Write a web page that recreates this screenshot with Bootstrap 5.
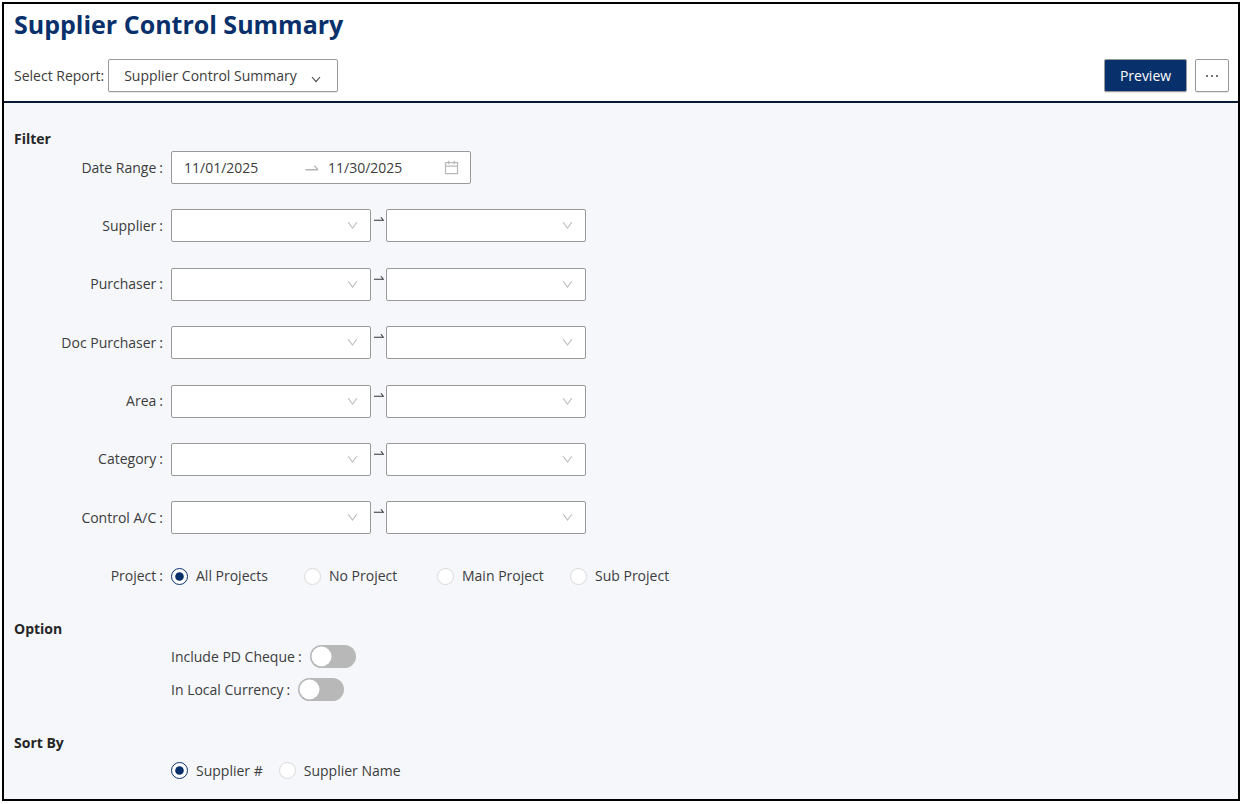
<!DOCTYPE html>
<html lang="en">
<head>
<meta charset="utf-8">
<meta name="viewport" content="width=device-width, initial-scale=1">
<title>Supplier Control Summary</title>
<link href="https://cdn.jsdelivr.net/npm/bootstrap@5.3.0/dist/css/bootstrap.min.css" rel="stylesheet">
<style>
  :root { --navy: #08306b; --line: #999; --ink: #3c3c3c; }
  body { font-family: "Open Sans", "Noto Sans", sans-serif; font-size: 14px; line-height: 22px; color: var(--ink); padding: 2px 2px 3px; min-height: 100vh; }
  .report-frame { border: 2px solid #000; background: #f5f7fb; }
  .report-head { background: #fff; border-bottom: 2px solid #0b1a33; padding: 0 9px 9px 10px; }
  .report-title { font-size: 25px; line-height: 40px; font-weight: 700; color: var(--navy); margin-bottom: 15px; }
  .report-body { padding: 25px 10px 12px; }
  .section-title { font-size: 14px; line-height: 22px; font-weight: 700; color: #262626; margin: 0 0 1px; }
  .field-grid { display: grid; grid-template-columns: 157px 1fr; grid-auto-rows: 1fr; min-height: 467px; }
  .field-label { height: 33px; display: flex; align-items: center; justify-content: flex-end; padding-right: 8px; }
  .field-cell { height: 33px; }
  .colon { margin-left: 3px; }
  .box { height: 33px; border: 1px solid var(--line); border-radius: 2px; background-color: #fff; font-size: 14px; color: var(--ink); }
  .form-select.box { width: 200px; padding: 0 32px 0 12px; background-size: 13px 13px; background-position: right 11px center;
    background-image: url("data:image/svg+xml,%3csvg xmlns='http://www.w3.org/2000/svg' viewBox='0 0 1024 1024'%3e%3cpath fill='%23bbb' d='M884 256h-75c-5.1 0-9.9 2.5-12.9 6.6L512 654.2 227.9 262.6c-3-4.1-7.8-6.6-12.9-6.6h-75c-6.5 0-10.3 7.4-6.5 12.7l352.6 486.1c12.8 17.6 39 17.6 51.7 0l352.6-486.1c3.9-5.3.1-12.7-6.4-12.7z'/%3e%3c/svg%3e"); }
  .form-select.report-pick { width: 230px; padding: 0 32px 0 15px; background-size: 10px 7px; background-position: right 16px top 16px; box-shadow: 0 1px 1px #0000001a;
    background-image: url("data:image/svg+xml,%3csvg xmlns='http://www.w3.org/2000/svg' viewBox='0 0 10 7'%3e%3cpath fill='none' stroke='%23444' stroke-width='1.1' d='M1 1l4 4.6L9 1'/%3e%3c/svg%3e"); }
  .tool-btn { height: 33px; border: 1px solid var(--line); border-radius: 2px; font-size: 14px; line-height: 22px; box-shadow: 0 1px 1px #0000001a; padding: 0; }
  .tool-btn.btn-preview { width: 83px; background: var(--navy); color: #fff; font-weight: 500; }
  .tool-btn.btn-more { width: 34px; background: #fff; display: flex; align-items: center; justify-content: center; }
  .swap { width: 15px; height: 33px; display: flex; justify-content: center; padding-top: 3px; }
  .date-box { width: 300px; display: flex; align-items: center; padding: 0 12px 0 12px; }
  .date-box input { border: 0; padding: 0; background: none; color: inherit; width: 115px; line-height: 22px; }
  .date-box svg { flex: none; }
  .date-box .to-arrow { margin: 0 7px 0 4px; }
  .form-check-input.pick { float: none; width: 17px; height: 17px; margin: 0; border: 1px solid #d9d9d9; background-color: #fff; flex: none; }
  .form-check-input.pick:checked { border-color: var(--navy); background-color: #fff; background-size: 17px 17px; background-position: center;
    background-image: url("data:image/svg+xml,%3csvg xmlns='http://www.w3.org/2000/svg' viewBox='0 0 17 17'%3e%3ccircle cx='8.5' cy='8.5' r='4.3' fill='%2308306b'/%3e%3c/svg%3e"); }
  .pick-item { display: flex; align-items: center; gap: 8px; }
  .wide-picks .pick-item { width: 133px; }
  .indent { margin-left: 157px; }
  .line-row { height: 33px; display: flex; align-items: center; }
  .form-check-input.toggle { float: none; margin: 0 0 0 8px; width: 46px; height: 23px; border: 0; border-radius: 12px; background-color: #b8b8b8; background-size: 23px 23px; background-position: left center;
    background-image: url("data:image/svg+xml,%3csvg xmlns='http://www.w3.org/2000/svg' viewBox='0 0 23 23'%3e%3ccircle cx='11.5' cy='12.5' r='9.5' fill='%23999' opacity='.5'/%3e%3ccircle cx='11.5' cy='11.5' r='10' fill='%23fff'/%3e%3c/svg%3e"); }
  .sort-title { margin-top: 26px; margin-bottom: 0; }
</style>
</head>
<body>
<svg class="d-none" xmlns="http://www.w3.org/2000/svg">
  <symbol id="swap-right" viewBox="0 0 1024 1024"><path d="M873.1 596.2l-164-208A32 32 0 00684 376h-64.8c-6.7 0-10.4 7.700-6.300 13l144.300 183H152c-4.400 0-8 3.600-8 8v60c0 4.400 3.600 8 8 8h695.900c26.800 0 41.700-30.800 25.200-51.800z"/></symbol>
</svg>
<div class="report-frame">
  <header class="report-head">
    <h1 class="report-title">Supplier Control Summary</h1>
    <div class="d-flex align-items-center justify-content-between">
      <div class="d-flex align-items-center">
        <label for="report">Select Report:</label>
        <select id="report" class="form-select box report-pick ms-1"><option>Supplier Control Summary</option></select>
      </div>
      <div class="d-flex gap-2">
        <button type="button" class="btn tool-btn btn-preview">Preview</button>
        <button type="button" class="btn tool-btn btn-more" aria-label="More"><svg width="14" height="4" viewBox="0 0 14 4" fill="#444"><circle cx="2" cy="2" r="1"/><circle cx="7" cy="2" r="1"/><circle cx="12" cy="2" r="1"/></svg></button>
      </div>
    </div>
  </header>
  <main class="report-body">
    <h2 class="section-title">Filter</h2>
    <div class="field-grid">
      <label class="field-label" for="d1">Date Range<span class="colon">:</span></label>
      <div class="field-cell">
        <div class="box date-box">
          <input id="d1" type="text" value="11/01/2025">
          <svg class="to-arrow" width="18" height="18" fill="#b5b5b5"><use href="#swap-right"/></svg>
          <input type="text" value="11/30/2025" aria-label="End date">
          <svg width="17" height="17" viewBox="0 0 1024 1024" fill="#b8b8b8"><path d="M880 184H712v-64c0-4.400-3.600-8-8-8h-56c-4.400 0-8 3.600-8 8v64H384v-64c0-4.400-3.600-8-8-8h-56c-4.400 0-8 3.600-8 8v64H144c-17.700 0-32 14.300-32 32v664c0 17.700 14.300 32 32 32h736c17.700 0 32-14.300 32-32V216c0-17.700-14.300-32-32-32zm-40 656H184V460h656v380zM184 392V256h128v48c0 4.400 3.600 8 8 8h56c4.400 0 8-3.600 8-8v-48h256v48c0 4.400 3.600 8 8 8h56c4.400 0 8-3.600 8-8v-48h128v136H184z"/></svg>
        </div>
      </div>
      <label class="field-label" for="f1">Supplier<span class="colon">:</span></label>
      <div class="field-cell d-flex"><select id="f1" class="form-select box"><option></option></select><span class="swap"><svg width="14" height="14" fill="#333"><use href="#swap-right"/></svg></span><select class="form-select box" aria-label="Supplier to"><option></option></select></div>
      <label class="field-label" for="f2">Purchaser<span class="colon">:</span></label>
      <div class="field-cell d-flex"><select id="f2" class="form-select box"><option></option></select><span class="swap"><svg width="14" height="14" fill="#333"><use href="#swap-right"/></svg></span><select class="form-select box" aria-label="Purchaser to"><option></option></select></div>
      <label class="field-label" for="f3">Doc Purchaser<span class="colon">:</span></label>
      <div class="field-cell d-flex"><select id="f3" class="form-select box"><option></option></select><span class="swap"><svg width="14" height="14" fill="#333"><use href="#swap-right"/></svg></span><select class="form-select box" aria-label="Doc Purchaser to"><option></option></select></div>
      <label class="field-label" for="f4">Area<span class="colon">:</span></label>
      <div class="field-cell d-flex"><select id="f4" class="form-select box"><option></option></select><span class="swap"><svg width="14" height="14" fill="#333"><use href="#swap-right"/></svg></span><select class="form-select box" aria-label="Area to"><option></option></select></div>
      <label class="field-label" for="f5">Category<span class="colon">:</span></label>
      <div class="field-cell d-flex"><select id="f5" class="form-select box"><option></option></select><span class="swap"><svg width="14" height="14" fill="#333"><use href="#swap-right"/></svg></span><select class="form-select box" aria-label="Category to"><option></option></select></div>
      <label class="field-label" for="f6">Control A/C<span class="colon">:</span></label>
      <div class="field-cell d-flex"><select id="f6" class="form-select box"><option></option></select><span class="swap"><svg width="14" height="14" fill="#333"><use href="#swap-right"/></svg></span><select class="form-select box" aria-label="Control A/C to"><option></option></select></div>
      <span class="field-label" id="project-label">Project<span class="colon">:</span></span>
      <div class="field-cell d-flex align-items-center wide-picks" role="radiogroup" aria-labelledby="project-label">
        <label class="pick-item"><input class="form-check-input pick" type="radio" name="project" checked>All Projects</label>
        <label class="pick-item"><input class="form-check-input pick" type="radio" name="project">No Project</label>
        <label class="pick-item"><input class="form-check-input pick" type="radio" name="project">Main Project</label>
        <label class="pick-item"><input class="form-check-input pick" type="radio" name="project">Sub Project</label>
      </div>
    </div>
    <h2 class="section-title mb-0">Option</h2>
    <div class="indent">
      <div class="line-row"><label for="pd">Include PD Cheque<span class="colon">:</span></label><input id="pd" class="form-check-input toggle" type="checkbox" role="switch"></div>
      <div class="line-row"><label for="lc">In Local Currency<span class="colon">:</span></label><input id="lc" class="form-check-input toggle" type="checkbox" role="switch"></div>
    </div>
    <h2 class="section-title sort-title">Sort By</h2>
    <div class="indent line-row gap-3">
      <label class="pick-item"><input class="form-check-input pick" type="radio" name="sort" checked>Supplier #</label>
      <label class="pick-item"><input class="form-check-input pick" type="radio" name="sort">Supplier Name</label>
    </div>
  </main>
</div>
<script src="https://cdn.jsdelivr.net/npm/bootstrap@5.3.0/dist/js/bootstrap.bundle.min.js"></script>
</body>
</html>
